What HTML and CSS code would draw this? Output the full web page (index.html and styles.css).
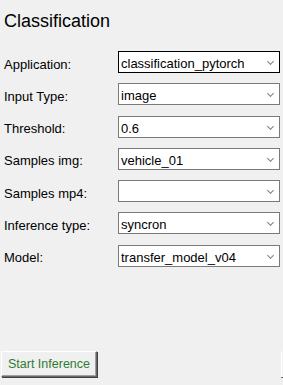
FILE: index.html
```html
<!DOCTYPE html>
<html lang="en">
<head>
  <meta charset="UTF-8">
  <meta name="viewport" content="width=device-width, initial-scale=1.0">
  <title>Classification</title>
  <link rel="stylesheet" href="styles.css">
</head>
<body>
  <div class="window">
    <h1 class="title">Classification</h1>

    <div class="form">
      <label>Application:</label>
      <div class="combo active">classification_pytorch<span class="arrow"></span></div>

      <label>Input Type:</label>
      <div class="combo">image<span class="arrow"></span></div>

      <label>Threshold:</label>
      <div class="combo">0.6<span class="arrow"></span></div>

      <label>Samples img:</label>
      <div class="combo">vehicle_01<span class="arrow"></span></div>

      <label>Samples mp4:</label>
      <div class="combo"><span class="arrow"></span></div>

      <label>Inference type:</label>
      <div class="combo">syncron<span class="arrow"></span></div>

      <label>Model:</label>
      <div class="combo">transfer_model_v04<span class="arrow"></span></div>
    </div>

    <div class="actions">
      <button class="start-btn">Start Inference</button>
      <button class="edge-btn"></button>
    </div>
  </div>
</body>
</html>
```

FILE: styles.css
```css
* {
  box-sizing: border-box;
}
html, body {
  margin: 0;
  height: 100%;
}
body {
  background: #f0f0f0;
  font-family: 'Liberation Sans', Arial, sans-serif;
  color: #000;
  overflow: hidden;
}
.window {
  display: flex;
  flex-direction: column;
  height: 385px;
  padding: 0 2px 8px 4px;
}
.title {
  margin: 0;
  padding-top: 9px;
  font-size: 18px;
  font-weight: normal;
  line-height: 24px;
}
.form {
  display: grid;
  grid-template-columns: 114px 162px;
  grid-auto-rows: 22px;
  row-gap: 10.3px;
  margin-top: 18px;
  align-items: center;
}
.form label {
  font-size: 13px;
  padding-top: 4px;
}
.combo {
  position: relative;
  height: 22px;
  background: #fff;
  border: 1px solid #7a7a7a;
  font-size: 13px;
  line-height: 24px;
  padding-left: 2px;
}
.combo.active {
  border-color: #000;
}
.arrow {
  position: absolute;
  right: 6px;
  top: 7px;
  width: 5px;
  height: 5px;
  border-right: 1px solid #808080;
  border-bottom: 1px solid #808080;
  transform: rotate(45deg);
}
.actions {
  margin-top: auto;
  margin-left: -3px;
  margin-right: -2px;
  display: flex;
  justify-content: space-between;
}
.start-btn {
  width: 96px;
  height: 26px;
  padding: 0;
  background: #f0f0f0;
  border: 1px solid;
  border-color: #fff #696969 #696969 #fff;
  box-shadow: inset -1px -1px 0 #a0a0a0, 1px 1px 0 #404040;
  color: #2e7d32;
  font-family: 'Liberation Sans', Arial, sans-serif;
  font-size: 12.5px;
}
.edge-btn {
  width: 2px;
  height: 26px;
  padding: 0;
  background: #f0f0f0;
  border: none;
  border-left: 1px solid #fff;
  box-shadow: 0 1px 0 #696969;
}
```
